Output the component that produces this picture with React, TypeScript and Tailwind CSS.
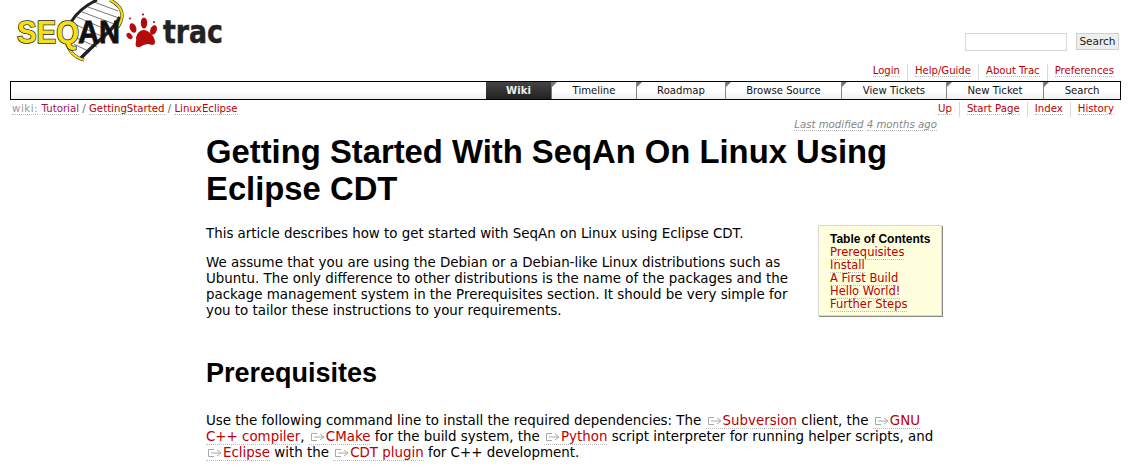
const verdana = 'font-["DejaVu_Sans",sans-serif]';

const Logo = () => (
  <svg width="215" height="64" viewBox="10 0 215 64" className="block">
    {/* helix band */}
    <path d="M71 21 C78 11 86 5 96 0 L111 0 C118 6 121 12 120 18 C113 30 98 40 81 58 C75 52 71 44 69 34 Z" fill="#fff" />
    <path d="M74 24 L106 38 M77 17 L112 32 M82 12 L117 25 M88 7 L119 18 M94 2 L118 11 M72 36 L97 47 M74 44 L90 52" stroke="#777" strokeWidth="1" />
    <path d="M71 22 C78 11 86 5 97 0" fill="none" stroke="#222" strokeWidth="3" />
    <path d="M120 17 C113 31 98 40 81 58" fill="none" stroke="#222" strokeWidth="3.5" />
    <path d="M110 0 C118 4 122 10 122 15 C122 20 120 24 118 27" fill="none" stroke="#222" strokeWidth="3.2" />
    <path d="M110 0 C118 4 122 10 122 15 C122 20 120 24 118 27" fill="none" stroke="#f4dc14" strokeWidth="2.2" />
    <path d="M66 40 C68 50 73 57 84 60" fill="none" stroke="#222" strokeWidth="3.2" />
    <path d="M66 40 C68 50 73 57 84 60" fill="none" stroke="#f4dc14" strokeWidth="2.2" />
    <text x="17" y="42.5" fontFamily="Liberation Sans" fontWeight="700" fontSize="32" textLength="62" lengthAdjust="spacingAndGlyphs" fill="#f8e010" stroke="#222" strokeWidth="1.6" paintOrder="stroke">SEQ</text>
    <text x="78" y="42.5" fontFamily="Liberation Sans" fontWeight="700" fontSize="32" textLength="42" lengthAdjust="spacingAndGlyphs" fill="#111" stroke="#111" strokeWidth="0.8">AN</text>
    {/* paw */}
    <g fill="#b40a0a">
      <path d="M144 30 C150 31 155 37 155 42 C155 46 151 45 148 44 C144 44 140 48 137 47 C134 45 137 41 136 38 C137 33 140 30 144 30 Z" />
      <ellipse cx="133" cy="28" rx="3.2" ry="5" transform="rotate(-20 133 28)" />
      <ellipse cx="144" cy="23" rx="3.2" ry="5.5" />
      <ellipse cx="153.5" cy="30" rx="3.2" ry="5" transform="rotate(20 153.5 30)" />
      <ellipse cx="129.5" cy="36" rx="2.5" ry="3.5" transform="rotate(-40 129.5 36)" />
      <circle cx="130" cy="18.5" r="1" />
      <circle cx="143" cy="14.5" r="1.1" />
      <circle cx="154" cy="22" r="1" />
    </g>
    <text x="163" y="43" fontFamily="DejaVu Sans" fontWeight="700" fontSize="32" textLength="60" lengthAdjust="spacingAndGlyphs" fill="#222" stroke="#222" strokeWidth="0.5">trac</text>
  </svg>
);

const A = ({ children, visited }: { children: React.ReactNode; visited?: boolean }) => (
  <a className={`border-b border-dotted border-[#bbbbbb] ${visited ? 'text-[#a01058]' : 'text-[#bb0000]'}`}>{children}</a>
);

const Ext = ({ children }: { children: React.ReactNode }) => (
  <a className="border-b border-dotted border-[#bbbbbb] text-[#bb0000]">
    <svg width="15" height="10" viewBox="0 0 15 10" className="inline-block ml-[1px] mr-[1px] align-[-0.5px]" fill="none" stroke="#a3aba0" strokeWidth="1">
      <path d="M7 1.5 H1.5 V8.5 H7 M4 5 H13 M10 2 L14 5 L10 8" />
    </svg>
    {children}
  </a>
);

const navItems = [
  { label: 'Wiki', w: 'w-[66px]', active: true },
  { label: 'Timeline', w: 'w-[85px]' },
  { label: 'Roadmap', w: 'w-[89px]' },
  { label: 'Browse Source', w: 'w-[116px]' },
  { label: 'View Tickets', w: 'w-[105px]' },
  { label: 'New Ticket', w: 'w-[97px]' },
  { label: 'Search', w: 'w-[76px]' },
];

const SideLinks = ({ items, className }: { items: string[]; className?: string }) => (
  <div className={`flex justify-end ${className ?? ''}`}>
    {items.map((item, i) => (
      <span key={item} className={`px-[7px] leading-[13px] ${i > 0 ? 'border-l border-[#d7d7d7]' : ''} ${i === items.length - 1 ? 'pr-0' : ''}`}>
        <A>{item}</A>
      </span>
    ))}
  </div>
);

export default function App() {
  return (
    <div className={`w-[1131px] h-[471px] overflow-hidden bg-white text-black text-[13.4px] ${verdana}`}>
      <div className="flex justify-between h-[62px] pl-[10px] pr-[10px]">
        <Logo />
        <div className="flex items-start gap-[9px] pt-[11px] pr-[2px] mt-[22px]">
          <input className="w-[102px] h-[18px] border border-[#d7d7d7] bg-white" />
          <button className="w-[43px] h-[17px] bg-[#eeeeee] border border-[#d0d0d0] text-[10.5px] leading-[15px] text-[#222]">Search</button>
        </div>
      </div>

      <SideLinks items={['Login', 'Help/Guide', 'About Trac', 'Preferences']} className="pr-[17px] text-[10.1px] h-[19px] pt-[2px]" />

      <div className="mx-[10px] h-[19px] border border-black flex bg-gradient-to-b from-white via-white to-[#f0f0f0] text-[10.1px] text-[#111]">
        <div className="flex-1" />
        {navItems.map((n) => (
          <div
            key={n.label}
            className={`relative ${n.w} flex items-center justify-center pt-px leading-none ${n.active ? 'bg-gradient-to-b from-[#444444] to-[#222222] text-[#eeeeee] font-bold border-r border-[#777777]' : 'border-r border-[#888888] last:border-r-0'}`}
          >
            {!n.active && <span className="absolute left-0 top-0 w-0 h-0 border-t-[5px] border-r-[5px] border-t-[#777777] border-r-transparent" />}
            {n.label}
          </div>
        ))}
      </div>

      <div className="flex justify-between pl-[12px] pr-[17px] text-[10.2px] h-[17px] pt-[2px]">
        <div className="leading-[13px]">
          <span className="text-[#999999] tracking-[0.6px] border-b border-dotted border-[#bbbbbb]">wiki:</span>{' '}
          <A visited>Tutorial</A> <span className="text-[#666666]">/</span> <A>GettingStarted</A> <span className="text-[#666666]">/</span> <A>LinuxEclipse</A>
        </div>
        <SideLinks items={['Up', 'Start Page', 'Index', 'History']} />
      </div>

      <div className="text-right pr-[194px] text-[10.2px] italic text-[#888888] leading-[12px] h-[12px] mt-[2px]">
        <span className="border-b border-dotted border-[#bbbbbb]">Last modified</span> <span className="border-b border-dotted border-[#bbbbbb]">4 months ago</span>
      </div>

      <main className="ml-[206px] w-[736px]">
        <h1 className="font-['Liberation_Sans',sans-serif] font-bold text-[32.8px] leading-[37px] mt-[2px] mb-[19px] w-[720px]">
          Getting Started With SeqAn On Linux Using Eclipse CDT
        </h1>
        <div className="float-right w-[124px] h-[91px] -mt-[1px] ml-[28px] mb-2 bg-[#ffffdd] border border-[#d7d7d7] shadow-[1px_1px_0_#888888] pl-[11px] pt-[6px] text-[11.5px] leading-[13px]">
          <div className="font-['Liberation_Sans',sans-serif] font-bold text-[12px] leading-[14px]">Table of Contents</div>
          {['Prerequisites', 'Install', 'A First Build', 'Hello World!', 'Further Steps'].map((t) => (
            <div key={t}><A>{t}</A></div>
          ))}
        </div>
        <p className="leading-[16px] mb-[13px]">This article describes how to get started with SeqAn on Linux using Eclipse CDT.</p>
        <p className="leading-[16px]">
          We assume that you are using the Debian or a Debian-like Linux distributions such as Ubuntu. The only difference to other distributions is the name of the packages and the package management system in the Prerequisites section. It should be very simple for you to tailor these instructions to your requirements.
        </p>
        <h2 className="clear-both font-['Liberation_Sans',sans-serif] font-bold text-[27px] leading-[32px] mt-[38px] mb-[24px]">Prerequisites</h2>
        <p className="leading-[16px] w-[736px]">
          Use the following command line to install the required dependencies: The <Ext>Subversion</Ext> client, the <Ext>GNU C++ compiler</Ext>, <Ext>CMake</Ext> for the build system, the <Ext>Python</Ext> script interpreter for running helper scripts, and <Ext>Eclipse</Ext> with the <Ext>CDT plugin</Ext> for C++ development.
        </p>
      </main>
    </div>
  );
}
